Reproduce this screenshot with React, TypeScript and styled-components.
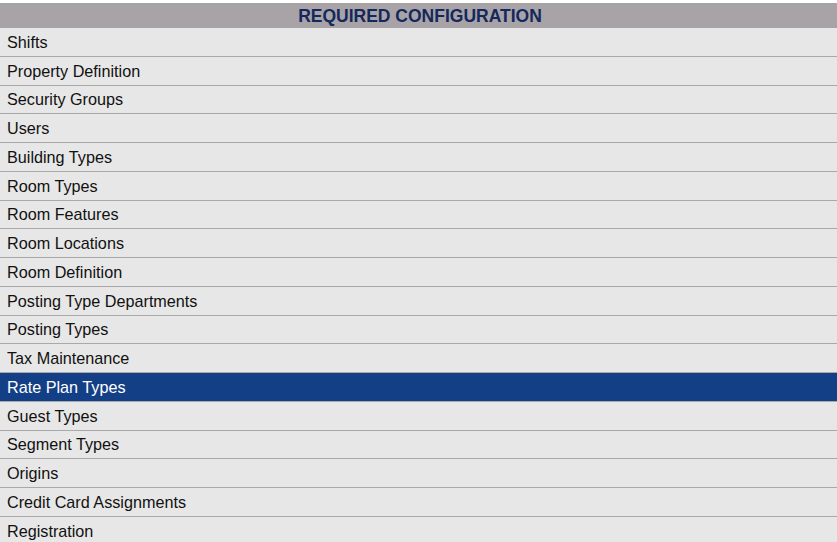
import React from 'react';
import styled, {createGlobalStyle} from 'styled-components';

const Global_Style = createGlobalStyle`
  body {
    margin: 0;
    padding-top: 3px;
    background: #fff;
    font-family: 'Liberation Sans', Arial, sans-serif;
  }
`;

const Panel = styled.div`
  width: 837px;
  display: flex;
  flex-direction: column;
`;

const Header = styled.div`
  height: 25px;
  background-color: #a7a3a6;
  color: #15275c;
  font-size: 17.5px;
  font-weight: 700;
  display: flex;
  align-items: center;
  justify-content: center;
  padding: 1px 0 0 3px;
  box-sizing: border-box;
`;

const Row = styled.div<{$selected: boolean}>`
  box-sizing: border-box;
  height: 28.75px;
  display: flex;
  align-items: center;
  padding: 1px 0 0 7px;
  font-size: 16.2px;
  color: ${(p) => (p.$selected ? '#fff' : '#111')};
  background-color: ${(p) => (p.$selected ? '#133f86' : '#e7e7e7')};
  border-bottom: 1px solid #a9a9a9;
  cursor: pointer;
`;

const items = [
  'Shifts',
  'Property Definition',
  'Security Groups',
  'Users',
  'Building Types',
  'Room Types',
  'Room Features',
  'Room Locations',
  'Room Definition',
  'Posting Type Departments',
  'Posting Types',
  'Tax Maintenance',
  'Rate Plan Types',
  'Guest Types',
  'Segment Types',
  'Origins',
  'Credit Card Assignments',
  'Registration',
];

export default function App() {
  return (
    <>
      <Global_Style />
      <Panel>
        <Header>REQUIRED CONFIGURATION</Header>
        {items.map((item) => (
          <Row key={item} $selected={item === 'Rate Plan Types'}>
            {item}
          </Row>
        ))}
      </Panel>
    </>
  );
}
